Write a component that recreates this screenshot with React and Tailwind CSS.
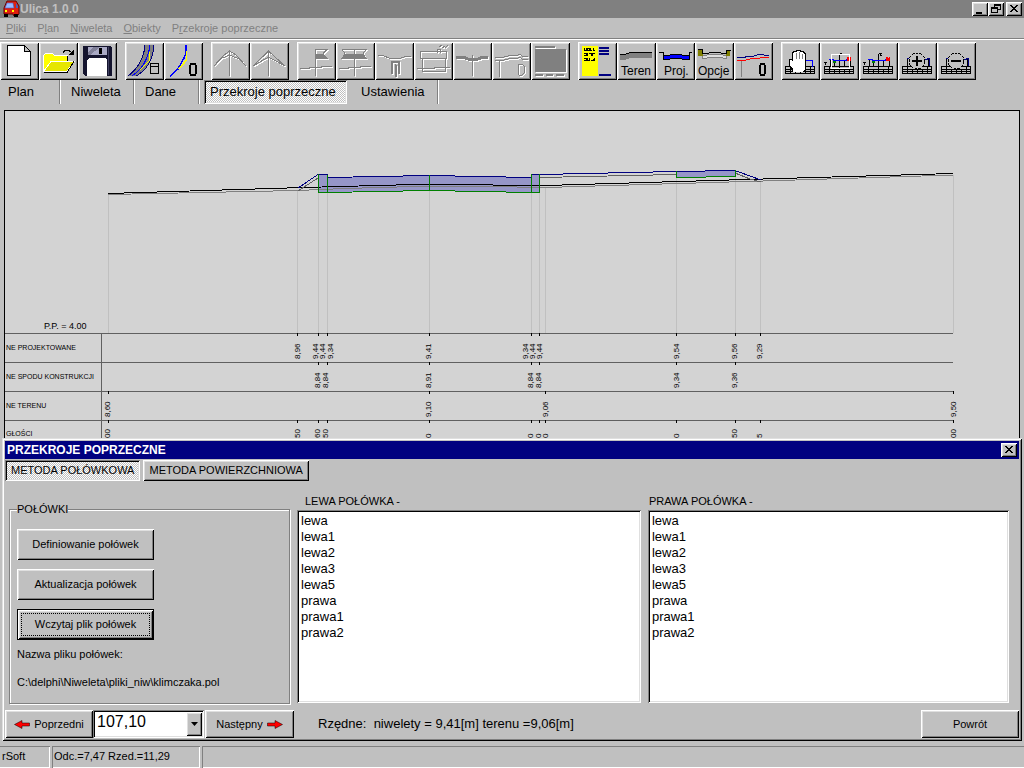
import { useState } from 'react';
import clsx from 'clsx';

const RAISED = 'shadow-[inset_1px_1px_0_#fff,inset_-1px_-1px_0_#000,inset_2px_2px_0_#dfdfdf,inset_-2px_-2px_0_#808080]';
const SUNKEN = 'shadow-[inset_1px_1px_0_#808080,inset_-1px_-1px_0_#fff,inset_2px_2px_0_#000,inset_-2px_-2px_0_#dfdfdf]';
const CHECKED = 'bg-[repeating-conic-gradient(#fff_0_25%,#c0c0c0_0_50%)] bg-[length:2px_2px]';

// greyed-out drawing: white copy one pixel down-right, grey copy on top
const Disabled = ({ children }) => (
    <>
        <g transform="translate(1 1)" stroke="#fff" color="#fff">{children}</g>
        <g stroke="#808080" color="#808080">{children}</g>
    </>
);

const Label = ({ x, children }) => (
    <text x={x} y="33" fontSize="12" fill="currentColor" stroke="none">{children}</text>
);

const Table = () => (
    <path d="M4.5 24.5H33.5V31.5H4.5ZM4 27.5H34M4 29.5H34M9.5 25V31M14.5 27V31M19.5 25V31M24.5 27V31M29.5 25V31" stroke="#000" />
);

const Section = () => (
    <>
        <Table />
        <path d="M10.5 24V17.5M14.5 24V19M19.5 24V12M24.5 24V19M30.5 24V17.5" stroke="#000" />
        <path d="M9 17.5H13L14 18.5H24L26 18.5L27 17.5H31" stroke="#00f" />
        <path d="M13 19H16V21H13Z" fill="#008000" />
        <path d="M27 15H28L29 16L30 15H31V19H27Z" fill="#f00" />
        <path d="M4 20.5H7M5.5 21V23" stroke="#000" />
    </>
);

const Magnifier = ({ plus }) => (
    <>
        <Table />
        <path d="M9.5 24V16M30.5 24V16" stroke="#000" />
        <path d="M9 16.5H11M27 17.5H29L30 16.5H31.5V24" stroke="#000080" />
        <circle cx="19" cy="19" r="8" fill="#c0c0c0" stroke="#000" strokeDasharray="3 1" />
        <path d={plus ? 'M14 19H24M19 14V24' : 'M14 19H24'} stroke="#000" strokeWidth="2" />
    </>
);

const icons = {
    Nowy: (
        <path d="M7.5 3.5H24.5L30.5 9.5V33.5H7.5ZM24.5 3.5V9.5H30.5" fill="#fff" stroke="#000" />
    ),
    Otwórz: (
        <>
            <path d="M4.5 29.5V13.5L6.5 11.5H13.5L15.5 13.5H28.5V19.5L26 29.5Z" fill="#ff0" stroke="#fff" />
            <path d="M12 19.5H35L28 29.5H4.5Z" fill="#e6e600" stroke="#fff" />
            <path d="M35 19.5L28 30.5H5M28.5 14V19" stroke="#000" />
            <path d="M24 10.5L26 8.5H30L33 11" stroke="#000" />
            <path d="M35 7V13H29Z" fill="#000" />
        </>
    ),
    Zapisz: (
        <>
            <path d="M5 4H32L34 6V34H7L5 32Z" fill="#14142e" />
            <path d="M10 5H29V13H10Z" fill="#a9a9c4" />
            <path d="M10 10L16 5H22L12 13H10Z" fill="#808098" />
            <path d="M21 6H24V12H21Z" fill="#000" />
            <path d="M9 18L11 16H27L29 18V34H9Z" fill="#fff" />
            <path d="M30 5H31V33H30Z" fill="#404060" />
        </>
    ),
    Droga: (
        <>
            <path d="M3 34C12 27 19 18 20 3H29C28 18 21 29 11 34Z" fill="#808080" />
            <path d="M3 34C12 27 19 18 20 3M11 34C21 29 28 18 29 3" stroke="#000080" />
            <path d="M7 34C16 28 23 19 25 3" stroke="#00f" />
            <path d="M24 10V19L15 28" stroke="#ff0" />
            <path d="M25.5 21.5H33.5V31.5H25.5ZM26 24.5H33" fill="#c0c0c0" stroke="#000" />
        </>
    ),
    Łuk: (
        <>
            <path d="M6 34L14 27L20 16L22 11V3" stroke="#00f" strokeWidth="1.5" />
            <path d="M22.5 9V18L15 27" stroke="#ff0" strokeWidth="1.5" />
            <path d="M27 22H31L32 24V31L31 33H27L26 31V24Z" stroke="#000" strokeWidth="2" />
        </>
    ),
    Strzałka: (
        <Disabled>
            <path d="M18.5 8V34M18.5 9L13 13L3 24M18.5 9L25 13L35 24M9 17L18.5 13L28 17" />
        </Disabled>
    ),
    Grot: (
        <Disabled>
            <path d="M18.5 8V34M18.5 9L3 24L18.5 15L35 24Z" />
        </Disabled>
    ),
    Flaga: (
        <Disabled>
            <path d="M18.5 7V34M3 26.5H12L13 25.5H24L25 24.5H35M19 7.5H30L26 11.5" />
            <path d="M19 12H26L30 16.5H19Z" fill="currentColor" />
        </Disabled>
    ),
    Flagi: (
        <Disabled>
            <path d="M18.5 7V34M3 26.5H12L13 25.5H24L25 24.5H35M6 7.5H30L27 11.5M6 7.5L9 11.5" />
            <path d="M9 12H27L30 16.5H6Z" fill="currentColor" />
        </Disabled>
    ),
    Przekrój: (
        <Disabled>
            <path d="M3 13.5H8L15 16.5H25L30 14.5H36M20.5 22V35" />
            <path d="M17 32V20H24V32M20.5 23V35" strokeWidth="2" />
        </Disabled>
    ),
    Budynek: (
        <Disabled>
            <path d="M6.5 9.5H32.5V16.5H6.5ZM8.5 17V29.5H31.5V17M3 26.5H20L21 25.5H36M23 11V7H26V11M25 5L28 3M28 6L31 4M31 6L34 3" />
        </Disabled>
    ),
    Dach: (
        <Disabled>
            <path d="M3 15H10L15 17H25L30 15H35" strokeWidth="3" />
            <path d="M19.5 13V34" />
        </Disabled>
    ),
    Niweleta: (
        <Disabled>
            <path d="M3 15.5H10L18 13.5H24L28 12.5L31 14.5H36M3 18.5H10L18 16.5H24L28 15.5L31 17.5H36M7.5 19V35" />
            <path d="M27 22H30L32 24V31L30 33H27L26 31V24Z" />
        </Disabled>
    ),
    Ekran: (
        <Disabled>
            <path d="M4.5 7.5H34.5V29.5H4.5Z" fill="currentColor" />
            <path d="M4 4.5H24M4 33H12M15 33H22M25 33H33" strokeWidth="2" />
        </Disabled>
    ),
    Tabela: (
        <>
            <path d="M4 4H20V34H4Z" fill="#ff0" />
            <path d="M6 6V8H8V6M9 6H11V8H9ZM12.5 6V8.500H14M15.500 6V8.500H17M6 11.500H8V13.500H6M9.500 11V14M11 11.500H13V13.500M14.500 14V11.500H17M6 16.500H8V18.500H6M9.500 16V18.500H11.500V16M13 18.500H15V16.500M16.500 16V19" stroke="#000" />
            <path d="M21 6H31M21 9H31M21 12H31M21 33H33" stroke="#000080" strokeWidth="2" />
        </>
    ),
    Teren: (
        <>
            <path d="M3 12H8L13 10H35V16H13L8 18H3Z" fill="#808080" />
            <path d="M3 12.5H8L13 10.5H35" stroke="#000" />
            <Label x="4">Teren</Label>
        </>
    ),
    Proj: (
        <>
            <path d="M7 14H12L16 13H24L28 14H34V18H28L24 17H16L12 18H7Z" fill="#00f" />
            <path d="M3 10.5H7.5V17.5H12L16 16.5H24L28 17.5H33.5V10.5H36M8 13.5H12L16 12.5H24L28 13.5H33" stroke="#000" />
            <Label x="8">Proj.</Label>
        </>
    ),
    Opcje: (
        <>
            <path d="M7 13H12L16 12H24L28 13H31V16H28L24 15H16L12 16H7Z" fill="#dfdfdf" stroke="#808080" />
            <path d="M3 8H8V14H3ZM31 9H35V14H31Z" fill="#808000" />
            <path d="M3 7.5H7.5V11.5H12L16 10.5H24L28 11.5H31.5V8.5H35.5" stroke="#000" />
            <Label x="3">Opcje</Label>
        </>
    ),
    Profil: (
        <>
            <path d="M7.5 19V35" stroke="#808080" />
            <path d="M3 15.5H9L14 14.5H19L24 12.5H29L31 13.5H35" stroke="#000080" />
            <path d="M3 18.5H10L18 16.5H24L28 15.5H35" stroke="#f00" />
            <path d="M27 22H30L31 24V31L30 33H27L26 31V24Z" stroke="#000" strokeWidth="2" />
        </>
    ),
    Przesuń: (
        <>
            <Table />
            <path d="M24 18.5H31M24.5 18V25M31.5 18V25" stroke="#00f" />
            <path d="M12 30V27L8 22V18L10 17L12 19V11L14 10V9H16V8H19V9H21V10H23V12H24V27L22 30Z" fill="#fff" />
            <path d="M11.500 30V27L8 22.500V18L10 17L11.500 18.500V11L13 9.500H15L16 8.500H19L20 9.500H22L24.500 12V27L22.500 30" stroke="#000" />
            <path d="M15.5 11V17M18.5 10V17M21.5 12V17" stroke="#808080" />
        </>
    ),
    Okno: (
        <>
            <Section />
            <path d="M20 11.5H22" stroke="#000" />
            <path d="M11.5 12.5H29.5V26.5H11.5Z" stroke="#fff" />
        </>
    ),
    Całość: (
        <>
            <Section />
            <path d="M20 11H23L21 13L23 14" stroke="#000" />
        </>
    ),
    Powiększ: <Magnifier plus />,
    Pomniejsz: <Magnifier />,
};

const toolGroups = [
    ['Nowy', 'Otwórz', 'Zapisz'],
    ['Droga', 'Łuk'],
    ['Strzałka', 'Grot'],
    ['Flaga', 'Flagi', 'Przekrój', 'Budynek', 'Dach', 'Niweleta', 'Ekran'],
    ['Tabela', 'Teren', 'Proj', 'Opcje', 'Profil'],
    ['Przesuń', 'Okno', 'Całość', 'Powiększ', 'Pomniejsz'],
];

const menus = [
    ['', 'P', 'liki'],
    ['P', 'l', 'an'],
    ['', 'N', 'iweleta'],
    ['', 'O', 'biekty'],
    ['P', 'r', 'zekroje poprzeczne'],
];

const pages = [
    { name: 'Plan', width: 'w-[61px] pl-2' },
    { name: 'Niweleta', width: 'w-[74px] pl-2.5' },
    { name: 'Dane', width: 'w-[65px] pl-2.5' },
    { name: 'Przekroje poprzeczne', width: 'ml-1 w-[143px] pl-1.5' },
    { name: 'Ustawienia', width: 'ml-1 w-[88px] pl-2.5' },
];

const halves = ['lewa', 'lewa1', 'lewa2', 'lewa3', 'lewa5', 'prawa', 'prawa1', 'prawa2'];

// [x, text] of the vertical readings, row by row
const readings = [
    { y: 359, items: [[300, '8,96'], [318, '9,44'], [325, '9,44'], [333, '9,34'], [431, '9,41'], [528, '9,34'], [535, '9,44'], [542, '9,44'], [679, '9,54'], [737, '9,56'], [762, '9,29']] },
    { y: 388, items: [[320, '8,84'], [328, '8,84'], [431, '8,91'], [533, '8,84'], [541, '8,84'], [679, '9,34'], [737, '9,36']] },
    { y: 417, items: [[110, '8,60'], [431, '9,10'], [548, '9,06'], [956, '9,50']] },
    { y: 438, items: [[110, '00'], [300, '50'], [320, '60'], [328, '50'], [431, '0'], [533, '0'], [541, '0'], [548, '0'], [679, '0'], [737, '50'], [762, '5'], [956, '00']] },
];

const ticks = [
    [333, [297, 318, 327, 429, 531, 539, 676, 735, 760]],
    [362, [318, 327, 429, 531, 539, 676, 735]],
    [391, [108, 429, 545, 953]],
    [420, [108, 297, 318, 327, 429, 531, 539, 545, 676, 735, 760, 953]],
];

const guides = [[108, 194], [297, 190], [318, 193], [327, 193], [429, 191], [531, 193], [539, 193], [545, 187], [676, 178], [735, 177], [760, 182], [953, 175]];

const CrossSection = () => (
    <svg viewBox="5 111 1014 327" className="block w-full" fill="none" shapeRendering="crispEdges" role="img" aria-label="Przekrój poprzeczny">
        {guides.map(([x, y]) => (
            <path key={x} d={`M${x + 0.5} ${y}V333`} stroke="#c0c0c0" />
        ))}
        <path d="M318 174H327V178L429 175.5L531 178V174H540V192H531L429 190L327 192H318Z" fill="#9696c8" />
        <path d="M676 171L735 170V176L676 178Z" fill="#9696c8" />
        <path d="M108 194.5L297 190.5L345 188.5L415 186.5H488L545 187.5L780 180.5L953 175" stroke="#808080" />
        <path d="M108 193.5L304 187.5L340 186.5L415 184.5H486L500 185.5H545L780 178.5L953 173.5" stroke="#000" />
        <path d="M298 191L304 187L318 178M540 177.5L676 174.5M735 173L750 179L761 182" stroke="#606060" />
        <path d="M298 188L318 174.5H327.5V177.5L429 175.5L531 177.5V174.5H540L676 171.5L735 170.5L761 180" stroke="#000080" />
        <path d="M318.5 174V192.5H327.5V175M327.5 192.5L429 190.5L531 192.5H539.5V174M531.5 174V192M429.5 175V190M676.5 171V177.5L735.5 176.5V170" stroke="#008000" />
        <path d="M5 333.5H953M5 362.5H953M5 391.5H953M5 420.5H953M101.5 333V438" stroke="#606060" />
        {ticks.map(([y, xs]) => xs.map((x) => (
            <path key={`${y}-${x}`} d={`M${x + 0.5} ${y}v3`} stroke="#000" />
        )))}
        <g fill="#000" className="text-[8px]">
            {readings.map(({ y, items }) => items.map(([x, text]) => (
                <text key={`${y}-${x}`} transform={`translate(${x} ${y}) rotate(-90)`}>{text}</text>
            )))}
        </g>
        <g fill="#000" className="text-[7px]">
            <text x="44" y="329" className="text-[9px]">P.P. = 4.00</text>
            <text x="6" y="350">NE PROJEKTOWANE</text>
            <text x="6" y="379">NE SPODU KONSTRUKCJI</text>
            <text x="6" y="408">NE TERENU</text>
            <text x="6" y="436">GŁOŚCI</text>
        </g>
    </svg>
);

const CaptionButton = ({ label, d, className }) => (
    <button type="button" aria-label={label} className={clsx('h-3.5 w-4 bg-[#c0c0c0]', RAISED, className)}>
        <svg viewBox="0 0 16 14" className="block h-3.5 w-4" fill="none" stroke="#000" shapeRendering="crispEdges">
            <path d={d} />
        </svg>
    </button>
);

const CLOSE = 'M4 3L11 10M5 3L12 10M11 3L4 10M12 3L5 10';

const CarIcon = () => (
    <svg viewBox="0 0 18 18" className="h-[18px] w-[18px]" aria-hidden="true">
        <path d="M5 1H14L17 6V14L15 16H12L11 14H2V8Z" fill="#e02010" stroke="#600" />
        <path d="M5 3H11L12 8H3Z" fill="#9ab8ff" stroke="#4060c0" strokeWidth=".6" />
        <path d="M14 3L16 6V8H14Z" fill="#4060c0" />
        <path d="M3 10H5V12H3ZM10 10H12V12H10Z" fill="#ff0" />
        <path d="M2 14H6V17H2ZM12 14H16V17H12Z" fill="#000" />
    </svg>
);

const Arrow = ({ left }) => (
    <svg viewBox="0 0 16 9" className={clsx('h-[9px] w-4 shrink-0', !left && 'rotate-180')} aria-hidden="true">
        <path d="M.5 4.5L8 .5V3H15.500V6H8V8.500Z" fill="#f00" stroke="#000" strokeWidth=".5" />
    </svg>
);

const PushButton = ({ children, className, focused }) => (
    <button
        type="button"
        className={clsx(
            'flex items-center justify-center gap-1 bg-[#c0c0c0] text-[11px]',
            focused ? 'border border-black' : '',
            RAISED,
            className
        )}
    >
        {focused ? (
            <span className="m-[3px] flex flex-1 items-center justify-center self-stretch border border-dotted border-black">{children}</span>
        ) : children}
    </button>
);

const HalfList = ({ id, title, className, labelClass }) => (
    <div className={clsx('flex flex-col', className)}>
        <label htmlFor={id} className={clsx('text-[11px] leading-[17px]', labelClass)}>{title}</label>
        <select id={id} size={8} className={clsx('h-[193px] w-full bg-white px-0.5 pt-[3px] text-[13px] outline-none', SUNKEN)}>
            {halves.map((name) => (
                <option key={name} className="min-h-4 p-0 pl-0.5 leading-4">{name}</option>
            ))}
        </select>
    </div>
);

const App = () => {
    const [page, setPage] = useState('Przekroje poprzeczne');
    const [method, setMethod] = useState('METODA POŁÓWKOWA');

    return (
        <div className="flex min-h-screen flex-col bg-[#c0c0c0] font-['Liberation_Sans',Arial,sans-serif] text-black">
            <header className="flex h-[18px] items-center bg-[#808080] pr-0.5 pl-0.5">
                <CarIcon />
                <h1 className="flex-1 text-xs font-bold text-[#c0c0c0]">Ulica 1.0.0</h1>
                <CaptionButton label="Minimalizuj" d="M4 10H10M4 11H10" />
                <CaptionButton label="Przywróć" d="M6 2.500H12M6.500 2V5M12.500 2V8M6 3.500H12M10 7.500H12M3 5.500H10M3.500 5V11M9.500 5V11M3 6.500H10M3 10.500H10" />
                <CaptionButton label="Zamknij" d={CLOSE} className="ml-0.5" />
            </header>

            <nav className="flex h-[21px] items-center gap-[11px] border-b border-[#808080] pl-1.5 text-[11px] text-[#808080] shadow-[0_1px_0_#fff]">
                {menus.map(([before, key, after]) => (
                    <a key={before + key + after} href="#">
                        {before}<u>{key}</u>{after}
                    </a>
                ))}
            </nav>

            <div role="toolbar" className="mt-[3px] flex gap-2">
                {toolGroups.map((group) => (
                    <div key={group[0]} className="flex">
                        {group.map((name) => (
                            <button key={name} type="button" aria-label={name} className={clsx('h-[38px] w-[39px]', RAISED)}>
                                <svg viewBox="0 0 39 38" className="block h-[38px] w-[39px]" fill="none" shapeRendering="crispEdges">
                                    {icons[name]}
                                </svg>
                            </button>
                        ))}
                    </div>
                ))}
            </div>

            <div className="flex h-6 items-stretch text-[13px]">
                {pages.map(({ name, width }) => (
                    <button
                        key={name}
                        type="button"
                        onClick={() => setPage(name)}
                        className={clsx(
                            'text-left whitespace-nowrap',
                            width,
                            page === name ? [SUNKEN, CHECKED] : 'border-r border-white shadow-[inset_-1px_0_0_#808080]'
                        )}
                    >
                        {name}
                    </button>
                ))}
            </div>

            <main className="mx-1 mt-1.5 flex-1 border-x border-t border-black bg-[#d3d3d3]">
                <CrossSection />
            </main>

            <section className="mx-0.5 bg-[#c0c0c0] p-[3px] shadow-[inset_1px_1px_0_#dfdfdf,inset_-1px_-1px_0_#000,inset_2px_2px_0_#fff,inset_-2px_-2px_0_#808080]">
                <div className="flex h-[18px] items-center bg-[#000080] pr-0.5 pl-0.5">
                    <h2 className="flex-1 text-xs font-bold text-white">PRZEKROJE POPRZECZNE</h2>
                    <CaptionButton label="Zamknij okno" d={CLOSE} />
                </div>

                <div className="mt-px flex gap-[3px] text-[11px]">
                    {['METODA POŁÓWKOWA', 'METODA POWIERZCHNIOWA'].map((name) => (
                        <button
                            key={name}
                            type="button"
                            onClick={() => setMethod(name)}
                            className={clsx('h-[21px] px-1.5 whitespace-nowrap', method === name ? [SUNKEN, CHECKED] : RAISED)}
                        >
                            {name}
                        </button>
                    ))}
                </div>

                <div className="mt-3 flex pr-2.5 pl-1">
                    <fieldset className="mt-2 flex h-[203px] w-[281px] flex-col border border-[#808080] px-[7px] text-[11px] shadow-[1px_1px_0_#fff,inset_1px_1px_0_#fff]">
                        <legend className="bg-[#c0c0c0] leading-[17px]">POŁÓWKI</legend>
                        <div className="mt-[11px] flex flex-col items-start gap-[9px]">
                            <PushButton className="h-[31px] w-[137px]">Definiowanie połówek</PushButton>
                            <PushButton className="h-[31px] w-[137px]">Aktualizacja połówek</PushButton>
                            <PushButton className="h-[31px] w-[137px]" focused>Wczytaj plik połówek</PushButton>
                        </div>
                        <p className="mt-1.5 leading-4">Nazwa pliku połówek:</p>
                        <p className="mt-3 leading-4">C:\delphi\Niweleta\pliki_niw\klimczaka.pol</p>
                    </fieldset>
                    <HalfList id="left-half" title="LEWA POŁÓWKA -" className="ml-[7px] flex-[20]" labelClass="pl-2" />
                    <HalfList id="right-half" title="PRAWA POŁÓWKA -" className="ml-[7px] flex-[21]" labelClass="pl-px" />
                </div>

                <div className="mt-1.5 flex h-7 items-stretch">
                    <PushButton className="w-[88px]"><Arrow left />Poprzedni</PushButton>
                    <div className="relative w-[111px]">
                        <select aria-label="Przekrój" className={clsx('h-7 w-full appearance-none bg-white pb-1 pl-1 text-base leading-5', SUNKEN)}>
                            <option>107,10</option>
                        </select>
                        <span className={clsx('pointer-events-none absolute top-0.5 right-0.5 flex h-6 w-4 items-center justify-center bg-[#c0c0c0]', RAISED)}>
                            <svg viewBox="0 0 7 4" className="h-1 w-[7px]"><path d="M0 0H7L3.500 4Z" /></svg>
                        </span>
                    </div>
                    <PushButton className="ml-px w-[89px]">Następny<Arrow /></PushButton>
                    <p className="ml-6 flex-1 self-center text-[13px] whitespace-pre">Rzędne:  niwelety = 9,41[m] terenu =9,06[m]</p>
                    <PushButton className="w-[98px]">Powrót</PushButton>
                </div>
            </section>

            <footer className="mt-[5px] flex h-[22px] gap-0.5 text-[11px] leading-[21px]">
                <span className="w-[50px] pl-0.5 shadow-[inset_0_1px_0_#808080,inset_-1px_-1px_0_#fff]">rSoft</span>
                <span className="w-[148px] pl-0.5 shadow-[inset_1px_1px_0_#808080,inset_-1px_-1px_0_#fff]">Odc.=7,47 Rzed.=11,29</span>
                <span className="flex-1 shadow-[inset_1px_1px_0_#808080,inset_0_-1px_0_#fff]" />
            </footer>
        </div>
    );
};

export default App;
